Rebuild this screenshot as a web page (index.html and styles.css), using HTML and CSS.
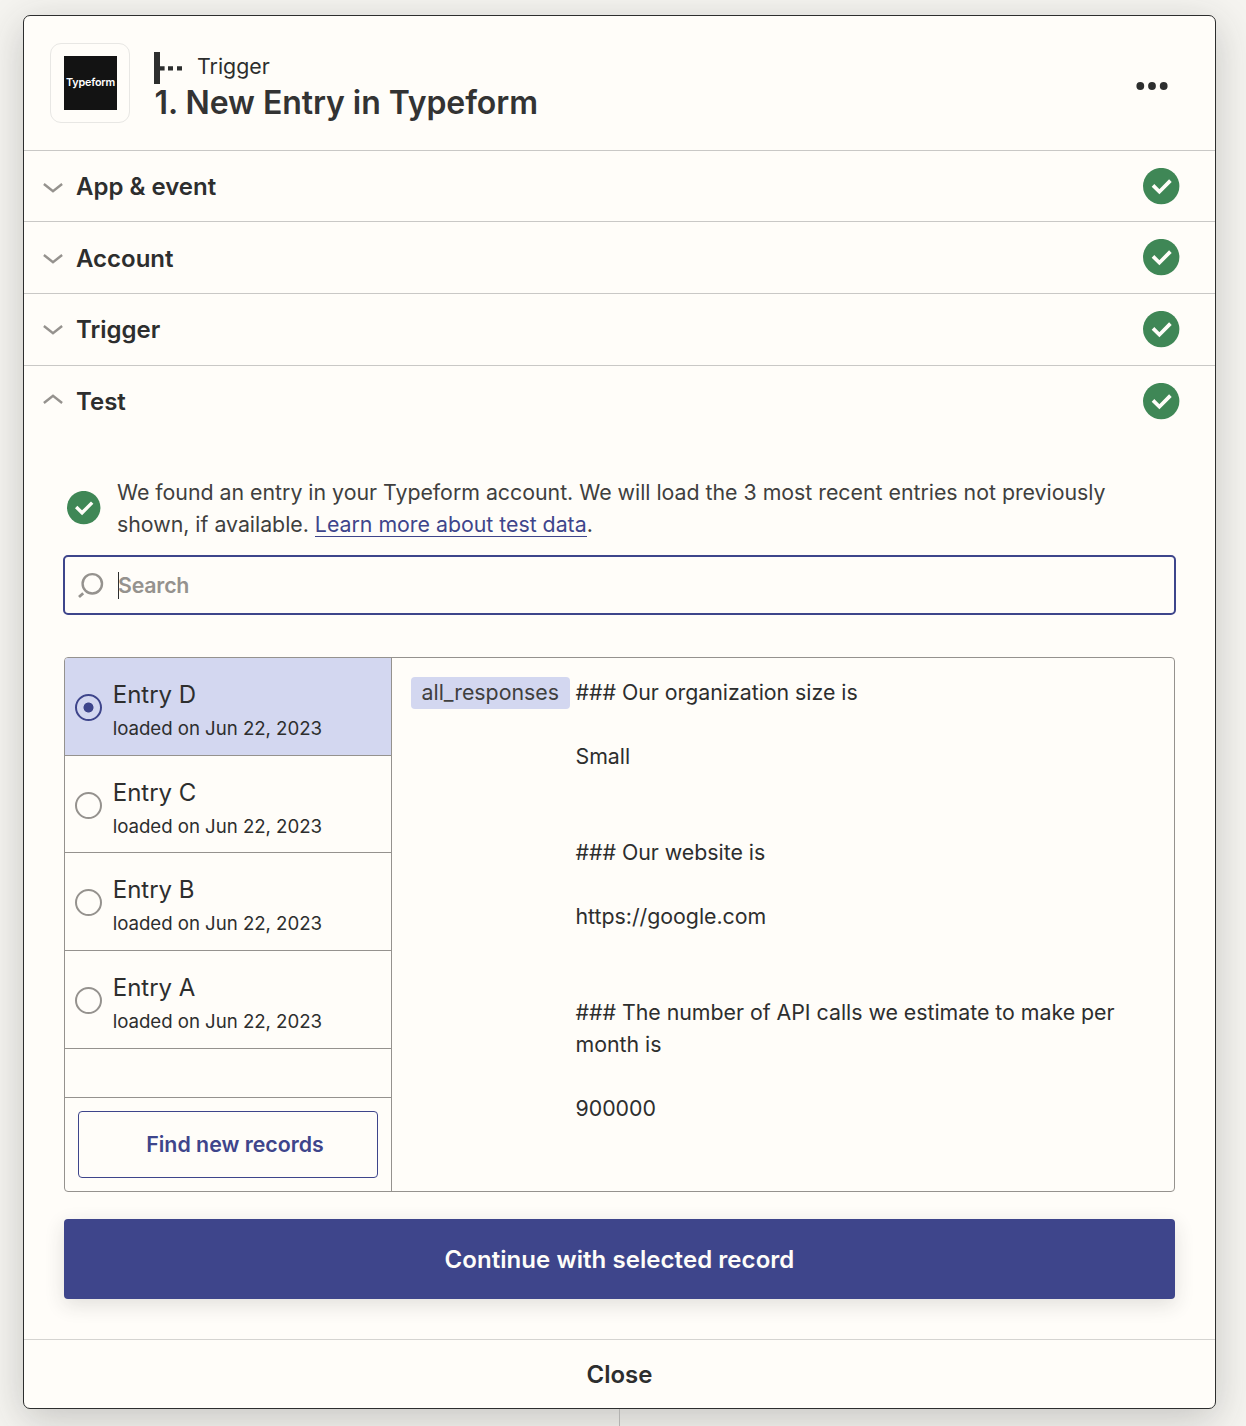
FILE: index.html
```html
<!DOCTYPE html>
<html lang="en">
<head>
<meta charset="utf-8">
<title>New Entry in Typeform</title>
<link rel="stylesheet" href="styles.css">
</head>
<body>
<svg class="defs" width="0" height="0" aria-hidden="true">
  <symbol id="check" viewBox="0 0 37 37">
    <circle cx="18.2" cy="18.1" r="18.2" fill="#3f8756"/>
    <path d="M10 17.4 L16.4 23.7 L27.4 12.6" fill="none" stroke="#fffdf9" stroke-width="3.7"/>
  </symbol>
  <symbol id="chevron" viewBox="0 0 20 12">
    <path d="M0.9 2 L10 9.3 L19.1 2" fill="none" stroke="#95928e" stroke-width="2.4"/>
  </symbol>
</svg>
<main class="card">
  <header class="header">
    <div class="logo"><div class="logo-mark">Typeform</div></div>
    <div class="heading">
      <div class="kicker">
        <svg class="kicker-icon" width="29" height="32" viewBox="0 0 29 32" fill="#2d2e2e"><path d="M0 0h6v32H0zM6 14.3h4.6v4.2H6zM14 14.3h5v4.2h-5zM23 14.3h5v4.2h-5z"/></svg>
        <span class="kicker-text">Trigger</span>
      </div>
      <h1 class="title">1. New Entry in Typeform</h1>
    </div>
    <svg class="more" width="32" height="10" viewBox="0 0 32 10" fill="#2d2e2e"><circle cx="4.3" cy="5" r="3.9"/><circle cx="16" cy="5" r="3.9"/><circle cx="27.7" cy="5" r="3.9"/></svg>
  </header>

  <section class="row row-first"><svg class="chev"><use href="#chevron"/></svg><h2 class="row-title">App &amp; event</h2><svg class="ok"><use href="#check"/></svg></section>
  <section class="row row-second"><svg class="chev"><use href="#chevron"/></svg><h2 class="row-title">Account</h2><svg class="ok"><use href="#check"/></svg></section>
  <section class="row"><svg class="chev"><use href="#chevron"/></svg><h2 class="row-title">Trigger</h2><svg class="ok"><use href="#check"/></svg></section>
  <section class="row row-open"><svg class="chev chev-up"><use href="#chevron"/></svg><h2 class="row-title">Test</h2><svg class="ok"><use href="#check"/></svg></section>

  <div class="panel">
    <div class="status">
      <svg class="status-icon"><use href="#check"/></svg>
      <p class="status-text">We found an entry in your Typeform account. We will load the 3 most recent entries not previously<br>shown, if available. <a class="link">Learn more about test data</a>.</p>
    </div>

    <div class="search">
      <svg class="search-icon" width="26" height="27" viewBox="0 0 26 27" fill="none" stroke="#95928e" stroke-width="2.4"><circle cx="14.3" cy="11.8" r="9.7"/><path d="M1 25 L5.2 21.2" stroke-width="2.8"/></svg>
      <span class="caret"></span><span class="placeholder">Search</span>
    </div>

    <div class="records">
      <div class="list">
        <div class="entry selected"><span class="radio"></span><div class="entry-text"><div class="entry-name">Entry D</div><div class="entry-date">loaded on Jun 22, 2023</div></div></div>
        <div class="entry entry-short"><span class="radio"></span><div class="entry-text"><div class="entry-name">Entry C</div><div class="entry-date">loaded on Jun 22, 2023</div></div></div>
        <div class="entry"><span class="radio"></span><div class="entry-text"><div class="entry-name">Entry B</div><div class="entry-date">loaded on Jun 22, 2023</div></div></div>
        <div class="entry"><span class="radio"></span><div class="entry-text"><div class="entry-name">Entry A</div><div class="entry-date">loaded on Jun 22, 2023</div></div></div>
        <div class="spacer"></div>
        <div class="find"><div class="find-button">Find new records</div></div>
      </div>
      <div class="detail">
        <div class="key"><span class="key-text">all_responses</span></div>
        <div class="value">### Our organization size is

Small


### Our website is

https://google.com


### The number of API calls we estimate to make per
month is

900000</div>
      </div>
    </div>

    <div class="continue"><span class="continue-text">Continue with selected record</span></div>
  </div>

  <footer class="footer"><span class="close">Close</span></footer>
</main>
<div class="connector"></div>
</body>
</html>
```

FILE: styles.css
```css
* { box-sizing: border-box; }
body {
  margin: 0;
  width: 1246px;
  height: 1426px;
  padding: 15px 30px 0 23px;
  overflow: hidden;
  background: #f5f4f0;
  color: #2d2e2e;
  font-family: Inter, "Liberation Sans", sans-serif;
  font-size: 21.33px;
  line-height: 32px;
}
h1, h2, p { margin: 0; }
svg { display: block; flex: none; }
.defs { position: absolute; }

.card {
  position: relative;
  display: flex;
  flex-direction: column;
  width: 1193px;
  height: 1394px;
  border: 1px solid #2d2e2e;
  border-radius: 7px;
  background: #fffdf9;
  box-shadow: 0 10px 40px rgba(45, 46, 46, 0.24);
}

.header {
  display: flex;
  height: 134px;
  padding: 27px 47px 0 26px;
}
.logo {
  display: flex;
  width: 80px;
  height: 80px;
  padding: 12px 0 0 13px;
  border: 1px solid #e8e7e4;
  border-radius: 11px;
}
.logo-mark {
  width: 53px;
  height: 54px;
  background: #131313;
  color: #fff;
  font-size: 10.8px;
  font-weight: 600;
  letter-spacing: -0.2px;
  line-height: 53px;
  text-align: center;
  white-space: nowrap;
}
.heading { flex: 1; padding-left: 24px; }
.kicker { display: flex; height: 40px; padding-top: 9px; }
.kicker-icon { margin-right: 14px; }
.kicker-text { line-height: 29px; }
.title { margin-left: 0.6px; color: #333; font-size: 32px; font-weight: 600; letter-spacing: -0.07px; line-height: 40px; white-space: nowrap; }
.more { margin-top: 38px; }

.row {
  display: flex;
  align-items: center;
  height: 72px;
  padding: 0 35px 0 19px;
  border-top: 1px solid #c9c8c6;
}
.row-first { height: 71px; }
.row-first .row-title, .row-second .row-title { padding-top: 2px; }
.row-first .chev, .row-second .chev { margin-top: 3px; }
.chev { width: 20px; height: 12px; margin-top: 1px; }
.chev-up { transform: rotate(180deg); margin-top: -5px; }
.row-title { flex: 1; margin-left: 13px; font-size: 24px; font-weight: 600; }
.ok { width: 37px; height: 37px; }

.panel { padding: 39px 40px 0; }
.status { display: flex; padding-left: 3px; }
.status-icon { width: 34px; height: 34px; margin: 15px 16px 0 0; }
.status-text { color: #403f3e; letter-spacing: -0.015px; white-space: nowrap; }
.link {
  padding-bottom: 25px;
  background: linear-gradient(#3e458b, #3e458b) 0 25px / 100% 1px no-repeat;
  color: #3e458b;
}

.search {
  display: flex;
  align-items: center;
  height: 60px;
  margin: 15px -1px 0;
  padding-left: 13px;
  border: 2px solid #3e458b;
  border-radius: 5px;
}
.search-icon { margin-right: 14px; }
.caret { width: 1px; height: 27px; margin-right: -1px; background: #2d2e2e; }
.placeholder { color: #95928e; font-weight: 600; letter-spacing: -0.2px; }

.records {
  display: flex;
  height: 535px;
  margin-top: 42px;
  border: 1px solid #95928e;
  border-radius: 4px;
  overflow: hidden;
}
.list { width: 327px; border-right: 1px solid #95928e; }
.entry {
  display: flex;
  height: 98px;
  padding: 21px 0 0 10px;
  border-bottom: 1px solid #95928e;
}
.entry-short { height: 97px; }
.selected { background: #d3d7f0; }
.radio {
  width: 27px;
  height: 27px;
  margin: 15px 11px 0 0;
  border: 2px solid #95928e;
  border-radius: 50%;
}
.selected .radio {
  border-color: #3e458b;
  background: radial-gradient(circle, #3e458b 4.6px, transparent 5.4px);
}
.entry-name { margin-left: -0.3px; font-size: 24px; }
.entry-date { margin-top: 4px; margin-left: -0.3px; font-size: 18.67px; letter-spacing: -0.04px; line-height: 28px; }
.spacer { height: 49px; border-bottom: 1px solid #95928e; }
.find { padding: 13px; }
.find-button {
  height: 67px;
  padding-left: 14px;
  border: 1px solid #3e458b;
  border-radius: 4px;
  color: #3e458b;
  font-weight: 600;
  line-height: 65px;
  text-align: center;
}
.detail { display: flex; padding: 19px; }
.key {
  width: 159px;
  height: 32px;
  margin-right: 5.5px;
  padding-left: 10.5px;
  border-radius: 4px;
  background: #d3d7f0;
  color: #403f3e;
  line-height: 30px;
}
.value { margin-top: -1px; letter-spacing: -0.02px; white-space: pre; }

.continue {
  height: 80px;
  margin-top: 27px;
  border-radius: 4px;
  background: #3e458b;
  box-shadow: 0 6px 20px rgba(45, 46, 46, 0.14);
  color: #fffdf9;
  font-size: 24px;
  font-weight: 600;
  letter-spacing: 0.06px;
  line-height: 82px;
  text-align: center;
}
.footer {
  height: 69px;
  margin-top: auto;
  border-top: 1px solid #d5d4d1;
  font-size: 24px;
  font-weight: 600;
  line-height: 69px;
  text-align: center;
}
.connector {
  position: relative;
  width: 1px;
  height: 17px;
  margin-left: 596px;
  background: #b3b2b0;
}
```
